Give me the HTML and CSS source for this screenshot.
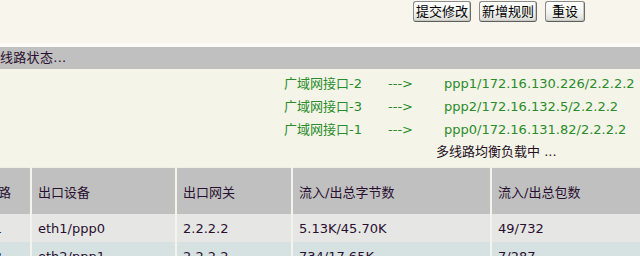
FILE: index.html
```html
<!DOCTYPE html>
<html lang="zh">
<head>
<meta charset="utf-8">
<title>线路状态</title>
<link rel="stylesheet" href="styles.css">
</head>
<body>
<div class="page">
  <div class="toolbar">
    <button class="btn">提交修改</button>
    <button class="btn">新增规则</button>
    <button class="btn btn-wide">重设</button>
  </div>
  <div class="sep"></div>
  <div class="section-title">线路状态...</div>
  <div class="status">
    <div class="route"><span class="wan">广域网接口-2</span><span class="arrow">---&gt;</span><span class="dest">ppp1/172.16.130.226/2.2.2.2</span></div>
    <div class="route"><span class="wan">广域网接口-3</span><span class="arrow">---&gt;</span><span class="dest">ppp2/172.16.132.5/2.2.2.2</span></div>
    <div class="route"><span class="wan">广域网接口-1</span><span class="arrow">---&gt;</span><span class="dest">ppp0/172.16.131.82/2.2.2.2</span></div>
    <div class="balance">多线路均衡负载中 ...</div>
  </div>
  <table class="grid">
    <colgroup>
      <col class="c0"><col class="c1"><col class="c2"><col class="c3"><col class="c4">
    </colgroup>
    <tr class="head">
      <td class="first">线路</td><td>出口设备</td><td>出口网关</td><td>流入/出总字节数</td><td>流入/出总包数</td>
    </tr>
    <tr class="row1">
      <td class="first">1</td><td>eth1/ppp0</td><td>2.2.2.2</td><td>5.13K/45.70K</td><td>49/732</td>
    </tr>
    <tr class="row2">
      <td class="first">2</td><td>eth2/ppp1</td><td>2.2.2.2</td><td>734/17.65K</td><td>7/287</td>
    </tr>
  </table>
</div>
</body>
</html>
```
FILE: styles.css
```css
html, body {
  margin: 0;
  padding: 0;
  background: #f7f5ec;
  overflow: hidden;
}
.page {
  width: 640px;
  height: 256px;
  overflow: hidden;
  font-family: "DejaVu Sans", "Noto Sans CJK SC", sans-serif;
  font-size: 13px;
  color: #301830;
  display: flex;
  flex-direction: column;
}
.page > * {
  flex-shrink: 0;
}
.toolbar {
  height: 43px;
  display: flex;
  justify-content: flex-end;
  align-items: flex-start;
  gap: 8px;
  padding-right: 55px;
  box-sizing: border-box;
  padding-top: 1px;
}
.btn {
  font-family: "DejaVu Sans", "Noto Sans CJK SC", sans-serif;
  font-size: 13px;
  color: #000;
  height: 21px;
  padding: 0 2px;
  margin: 0;
  border: 1px solid #8a8a8a;
  border-right-color: #6a6a6a;
  border-bottom-color: #5e5e5e;
  border-radius: 3px;
  background: linear-gradient(#ffffff, #f1f1ee 60%, #d9d9d4);
  box-shadow: inset -1px -1px 0 #c8c8c2;
  line-height: 18px;
}
.btn-wide {
  padding: 0 6px;
}
.sep {
  height: 4px;
  background: #fbfaf4;
}
.section-title {
  height: 22px;
  line-height: 22px;
  background: #c0c0c0;
  color: #2c1030;
  letter-spacing: 0.3px;
}
.status {
  background: #f4f4e8;
  padding-top: 3px;
  padding-left: 284px;
  height: 98px;
  box-sizing: border-box;
  display: flex;
  flex-direction: column;
}
.route {
  height: 23px;
  line-height: 23px;
  display: flex;
  white-space: nowrap;
  color: #2a8c2a;
}
.wan { width: 104px; }
.arrow { width: 56px; }
.balance {
  padding-left: 152px;
  height: 23px;
  line-height: 21px;
  color: #241024;
  white-space: nowrap;
}
.grid {
  border-collapse: collapse;
  table-layout: fixed;
  width: 676px;
  margin-left: -22px;
}
.c0 { width: 53px; }
.c1 { width: 145px; }
.c2 { width: 116px; }
.c3 { width: 199px; }
.c4 { width: 163px; }
.grid td {
  padding: 0 0 0 6px;
  border-left: 2px solid #f4f4ee;
  white-space: nowrap;
  overflow: hidden;
  color: #2a1030;
}
.grid td.first {
  border-left: none;
  padding: 0 12px 0 0;
  text-align: center;
}
.head td {
  height: 46px;
  background: #c0c0c0;
  border-top: 1px solid #f0efe6;
}
.row1 td {
  height: 28px;
  background: #e6e6e4;
}
.row2 td {
  height: 28px;
  background: #d6e2e2;
}
```
